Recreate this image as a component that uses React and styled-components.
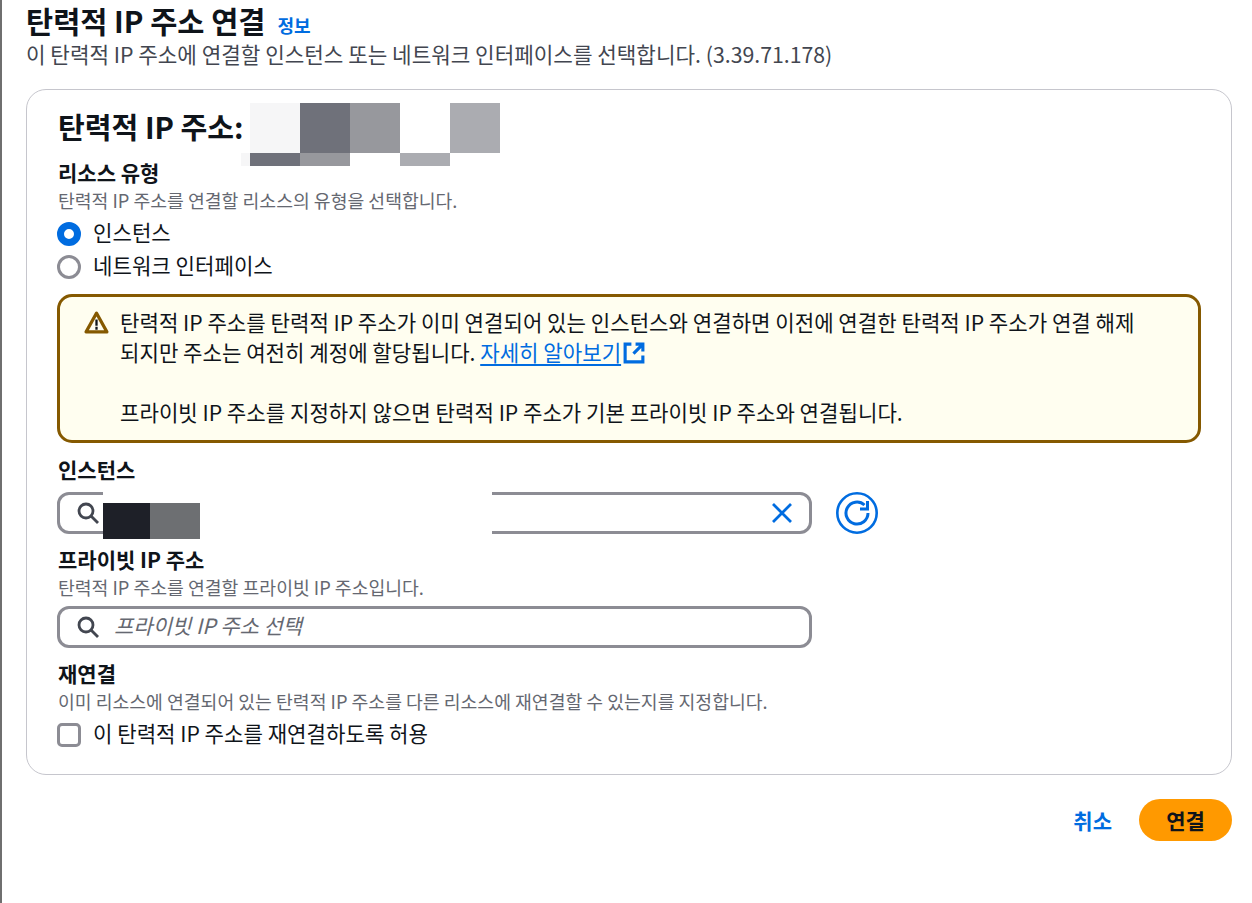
import React from "react";
import styled, { createGlobalStyle } from "styled-components";

const GlobalStyle = createGlobalStyle`
  html, body {
    margin: 0;
    padding: 0;
    background: #fff;
  }
  body {
    font-family: "Noto Sans CJK KR", "Noto Sans", sans-serif;
    color: #0f141a;
  }
`;

const Page = styled.div`
  box-sizing: border-box;
  width: 1252px;
  height: 903px;
  overflow: hidden;
  border-left: 2px solid #6f6f6f;
  padding: 0 20px 0 24px;
`;

const Header = styled.header`
  height: 89px;
`;

const TitleRow = styled.div`
  display: flex;
  align-items: baseline;
  gap: 12px;
  height: 41px;
  line-height: 40px;
`;

const Title = styled.h1`
  margin: 0;
  font-size: 29.5px;
  font-weight: 700;
`;

const InfoLink = styled.a`
  font-size: 18px;
  font-weight: 700;
  color: #006ce0;
`;

const Subtitle = styled.p`
  margin: 0;
  font-size: 21.27px;
  line-height: 26px;
  color: #424650;
`;

const Card = styled.section`
  box-sizing: border-box;
  width: 1206px;
  height: 686px;
  border: 1px solid #c6c6cd;
  border-radius: 20px;
  padding: 6px 31px 0 30px;
`;

const SectionHeading = styled.div`
  position: relative;
  display: flex;
  align-items: center;
  height: 62px;
  padding-bottom: 2px;
  box-sizing: border-box;
  margin-left: 1px;
`;

const CardTitle = styled.h2`
  margin: 0;
  font-size: 29.1px;
  font-weight: 700;
`;

const Mosaic = styled.div`
  position: absolute;
  left: ${(p) => p.$left}px;
  top: ${(p) => p.$top}px;
  display: flex;
`;

const Tile = styled.div`
  width: ${(p) => p.$w || 50}px;
  height: ${(p) => p.$h}px;
  background: ${(p) => p.$color};
`;

const Label = styled.div`
  margin-left: 1px;
  font-size: 21px;
  font-weight: 700;
  line-height: 29px;
`;

const Hint = styled.div`
  margin-left: 1px;
  font-size: 18.28px;
  line-height: 27px;
  color: #656871;
`;

const OptionList = styled.div`
  padding-top: 2px;
`;

const OptionRow = styled.label`
  display: flex;
  align-items: center;
  gap: 12px;
  height: 33px;
  font-size: 21.15px;
`;

const OptionText = styled.span`
  margin-bottom: 2px;
`;

const Radio = styled.span`
  box-sizing: border-box;
  width: 24px;
  height: 24px;
  flex: none;
  margin-top: 2px;
  border-radius: 50%;
  background: #fff;
  border: ${(p) => (p.$checked ? "7.5px solid #006ce0" : "3px solid #8c8c94")};
`;

const Checkbox = styled.span`
  box-sizing: border-box;
  width: 24px;
  height: 24px;
  flex: none;
  margin-top: 2px;
  border-radius: 5px;
  border: 3px solid #8c8c94;
`;

const Alert = styled.div`
  box-sizing: border-box;
  display: flex;
  gap: 11px;
  width: 1144px;
  height: 149px;
  margin: 12px 0;
  padding: 10px 20px 0 24px;
  border: 3px solid #855900;
  border-radius: 15px;
  background: #fffef0;
  font-size: 21.15px;
  line-height: 30px;
`;

const AlertIcon = styled.svg`
  flex: none;
  width: 25px;
  height: 25px;
  margin-top: 3px;
`;

const AlertBody = styled.div`
  flex: 1;
`;

const AlertGap = styled.div`
  height: 30px;
`;

const LearnMore = styled.a`
  color: #006ce0;
  text-decoration: underline;
  text-underline-offset: 3px;
`;

const ExternalIcon = styled.svg`
  width: 24px;
  height: 24px;
  margin-left: 1px;
  vertical-align: -4px;
`;

const FieldRow = styled.div`
  display: flex;
  align-items: center;
  gap: 24px;
  margin: ${(p) => p.$top}px 0 11px;
`;

const SearchField = styled.div`
  position: relative;
  box-sizing: border-box;
  display: flex;
  align-items: center;
  gap: 14px;
  width: 755px;
  height: 42px;
  padding: 0 15px 0 16px;
  border: 3px solid #8c8c94;
  border-radius: 12px;
  background: #fff;
  font-size: 21px;
`;

const Placeholder = styled.span`
  margin-bottom: 4px;
  font-style: italic;
  color: #656871;
`;

const Redaction = styled.div`
  position: absolute;
  left: 43px;
  top: -3px;
  width: 389px;
  height: 48px;
  background: #fff;
`;

const RedactionTiles = styled.div`
  position: absolute;
  left: 0;
  top: 11px;
  display: flex;
`;

const ClearButton = styled.button`
  margin-left: auto;
  display: flex;
  padding: 0;
  border: 0;
  background: none;
`;

const RefreshButton = styled.button`
  display: flex;
  padding: 0;
  border: 0;
  background: none;
`;

const Footer = styled.footer`
  display: flex;
  justify-content: flex-end;
  align-items: center;
  gap: 27px;
  width: 1206px;
  margin-top: 24px;
`;

const CancelLink = styled.a`
  font-size: 21px;
  font-weight: 700;
  color: #006ce0;
`;

const PrimaryButton = styled.button`
  width: 93px;
  height: 42px;
  padding: 0;
  border: 0;
  border-radius: 21px;
  background: #ff9900;
  color: #0f141a;
  font-family: inherit;
  font-size: 21px;
  font-weight: 700;
`;

const SearchIcon = () => (
  <svg width="24" height="24" viewBox="0 0 24 24" fill="none" stroke="#424650" strokeWidth="2.8">
    <circle cx="10" cy="10" r="7" />
    <path d="M15 15l7 7" />
  </svg>
);

export default function App() {
  return (
    <>
      <GlobalStyle />
      <Page>
        <Header>
          <TitleRow>
            <Title>탄력적 IP 주소 연결</Title>
            <InfoLink>정보</InfoLink>
          </TitleRow>
          <Subtitle>이 탄력적 IP 주소에 연결할 인스턴스 또는 네트워크 인터페이스를 선택합니다. (3.39.71.178)</Subtitle>
        </Header>
        <Card>
          <SectionHeading>
            <CardTitle>탄력적 IP 주소:</CardTitle>
            <Mosaic $left={192} $top={7}>
              <Tile $color="#f6f6f7" $h={50} />
              <Tile $color="#6f717a" $h={50} />
              <Tile $color="#97989d" $h={50} />
              <Tile $color="#fff" $h={50} />
              <Tile $color="#abacb1" $h={50} />
            </Mosaic>
            <Mosaic $left={183} $top={57}>
              <Tile $color="#f6f6f7" $w={9} $h={13} />
              <Tile $color="#6f717a" $h={13} />
              <Tile $color="#97989d" $h={13} />
              <Tile $color="#fff" $h={13} />
              <Tile $color="#abacb1" $h={13} />
            </Mosaic>
          </SectionHeading>
          <Label>리소스 유형</Label>
          <Hint>탄력적 IP 주소를 연결할 리소스의 유형을 선택합니다.</Hint>
          <OptionList>
            <OptionRow>
              <Radio $checked />
              <OptionText>인스턴스</OptionText>
            </OptionRow>
            <OptionRow>
              <Radio />
              <OptionText>네트워크 인터페이스</OptionText>
            </OptionRow>
          </OptionList>
          <Alert>
            <AlertIcon viewBox="0 0 24 24" fill="none">
              <path d="M12 3L2 21h20L12 3z" stroke="#855900" strokeWidth="3" strokeLinejoin="round" />
              <path d="M12 9v6M12 16v3" stroke="#0f141a" strokeWidth="2.2" />
            </AlertIcon>
            <AlertBody>
              탄력적 IP 주소를 탄력적 IP 주소가 이미 연결되어 있는 인스턴스와 연결하면 이전에 연결한 탄력적 IP 주소가 연결 해제
              <br />
              되지만 주소는 여전히 계정에 할당됩니다. <LearnMore>자세히 알아보기</LearnMore>
              <ExternalIcon viewBox="0 0 23 23" fill="none" stroke="#006ce0" strokeWidth="3">
                <path d="M9 3H3v17h17v-6M13 3h7v7M20 3l-9 9" />
              </ExternalIcon>
              <AlertGap />
              프라이빗 IP 주소를 지정하지 않으면 탄력적 IP 주소가 기본 프라이빗 IP 주소와 연결됩니다.
            </AlertBody>
          </Alert>
          <Label>인스턴스</Label>
          <FieldRow $top={8}>
            <SearchField>
              <SearchIcon />
              <Redaction>
                <RedactionTiles>
                  <Tile $color="#1e2028" $w={47} $h={36} />
                  <Tile $color="#6d6f72" $h={36} />
                </RedactionTiles>
              </Redaction>
              <ClearButton>
                <svg width="24" height="24" viewBox="0 0 24 24" fill="none" stroke="#006ce0" strokeWidth="2.8">
                  <path d="M3 3l18 18M21 3L3 21" />
                </svg>
              </ClearButton>
            </SearchField>
            <RefreshButton>
              <svg width="42" height="42" viewBox="0 0 42 42" fill="none" stroke="#006ce0">
                <circle cx="21" cy="21" r="19.7" strokeWidth="2.6" />
                <path d="M32 21a11 11 0 1 1-3.5-8" strokeWidth="3" />
                <path d="M24 17h7.5V9" strokeWidth="3" />
              </svg>
            </RefreshButton>
          </FieldRow>
          <Label>프라이빗 IP 주소</Label>
          <Hint>탄력적 IP 주소를 연결할 프라이빗 IP 주소입니다.</Hint>
          <FieldRow $top={5}>
            <SearchField>
              <SearchIcon />
              <Placeholder>프라이빗 IP 주소 선택</Placeholder>
            </SearchField>
          </FieldRow>
          <Label>재연결</Label>
          <Hint>이미 리소스에 연결되어 있는 탄력적 IP 주소를 다른 리소스에 재연결할 수 있는지를 지정합니다.</Hint>
          <OptionList>
            <OptionRow>
              <Checkbox />
              <OptionText>이 탄력적 IP 주소를 재연결하도록 허용</OptionText>
            </OptionRow>
          </OptionList>
        </Card>
        <Footer>
          <CancelLink>취소</CancelLink>
          <PrimaryButton>연결</PrimaryButton>
        </Footer>
      </Page>
    </>
  );
}
